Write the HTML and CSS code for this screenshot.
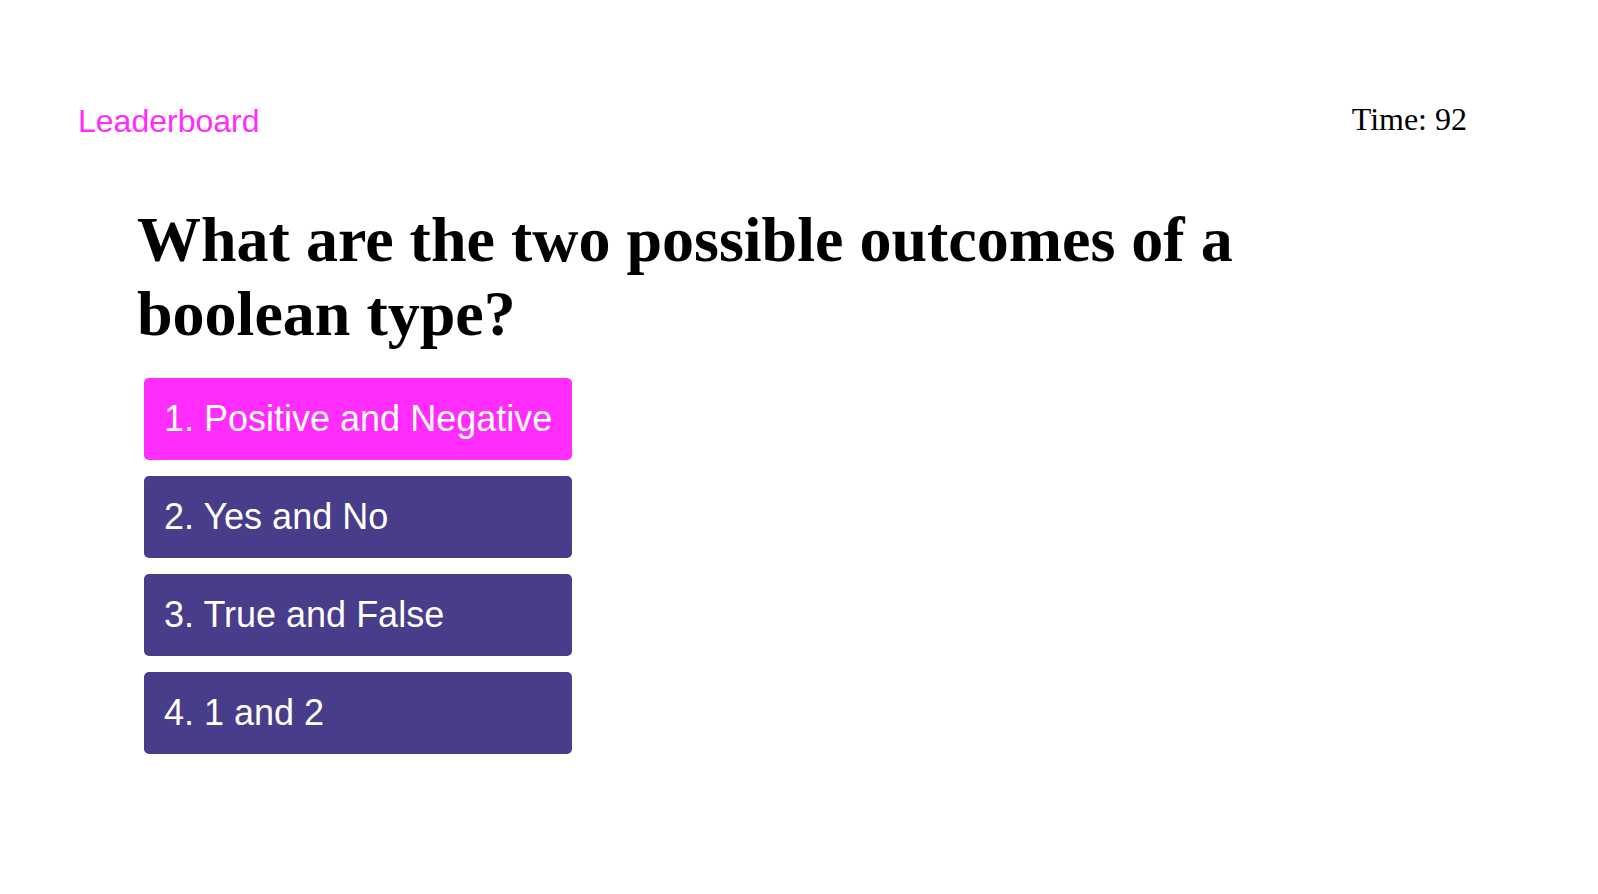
FILE: index.html
```html
<!DOCTYPE html>
<html lang="en">
<head>
<meta charset="utf-8">
<title>Code Quiz</title>
<link rel="stylesheet" href="styles.css">
</head>
<body>
  <header class="topbar">
    <a class="leaderboard-link" href="#">Leaderboard</a>
    <div class="timer">Time: 92</div>
  </header>
  <main class="quiz">
    <h1 class="question">What are the two possible outcomes of a boolean type?</h1>
    <div class="choices">
      <button class="choice choice-active">1. Positive and Negative</button>
      <button class="choice">2. Yes and No</button>
      <button class="choice">3. True and False</button>
      <button class="choice">4. 1 and 2</button>
    </div>
  </main>
</body>
</html>
```

FILE: styles.css
```css
html, body {
  margin: 0;
  padding: 0;
  background: #ffffff;
}

body {
  font-family: "Liberation Serif", "Times New Roman", serif;
  color: #000000;
}

.topbar {
  display: flex;
  justify-content: space-between;
  align-items: flex-start;
  padding: 99px 131px 0 78px;
}

.leaderboard-link {
  margin-top: 4px;
  font-family: "Liberation Sans", Arial, sans-serif;
  font-size: 32px;
  color: #ff2cfb;
  text-decoration: none;
}

.timer {
  margin-top: 2px;
  font-size: 32px;
}

.quiz {
  padding: 0 0 0 137px;
  margin-top: 63px;
}

.question {
  margin: 0;
  max-width: 1160px;
  font-size: 64px;
  font-weight: bold;
  line-height: normal;
}

.choices {
  display: flex;
  flex-direction: column;
  align-items: flex-start;
  gap: 16px;
  margin: 27px 0 0 7px;
}

.choice {
  box-sizing: border-box;
  width: 428px;
  padding: 20px 16px 20px 20px;
  border: none;
  border-radius: 5px;
  background: #483d8b;
  color: #ffffff;
  font-family: "Liberation Sans", Arial, sans-serif;
  font-size: 36px;
  line-height: normal;
  text-align: left;
  white-space: nowrap;
  cursor: pointer;
}

.choice-active {
  background: #ff2cfb;
}
```
